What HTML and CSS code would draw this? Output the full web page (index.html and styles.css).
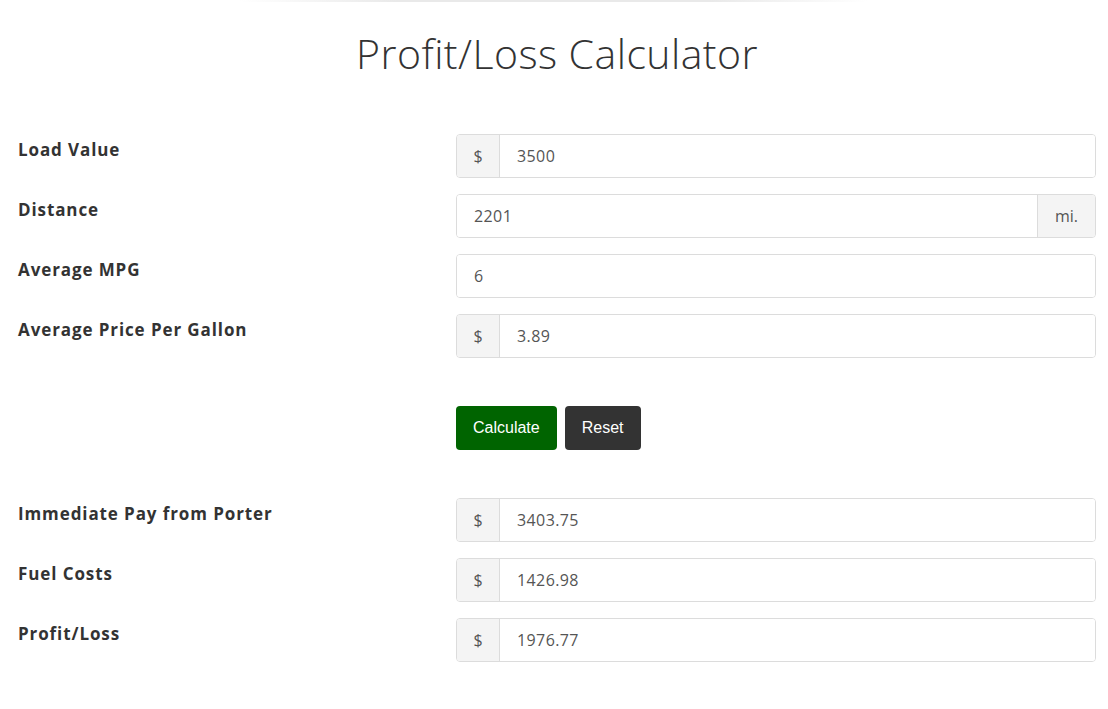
FILE: index.html
```html
<!DOCTYPE html>
<html lang="en">
<head>
<meta charset="utf-8">
<title>Profit/Loss Calculator</title>
<link rel="stylesheet" href="styles.css">
</head>
<body>
<div class="topline"></div>
<main class="page">
  <h1 class="title">Profit/Loss Calculator</h1>
  <form class="calc">
    <div class="row">
      <label class="label">Load Value</label>
      <div class="group"><span class="addon">$</span><input class="field" value="3500"></div>
    </div>
    <div class="row">
      <label class="label">Distance</label>
      <div class="group"><input class="field" value="2201"><span class="addon addon-right">mi.</span></div>
    </div>
    <div class="row">
      <label class="label">Average MPG</label>
      <div class="group"><input class="field" value="6"></div>
    </div>
    <div class="row">
      <label class="label">Average Price Per Gallon</label>
      <div class="group"><span class="addon">$</span><input class="field" value="3.89"></div>
    </div>
    <div class="row row-buttons">
      <div></div>
      <div class="buttons">
        <button type="button" class="btn btn-calc">Calculate</button>
        <button type="button" class="btn btn-reset">Reset</button>
      </div>
    </div>
    <div class="row">
      <label class="label">Immediate Pay from Porter</label>
      <div class="group"><span class="addon">$</span><input class="field" value="3403.75"></div>
    </div>
    <div class="row">
      <label class="label">Fuel Costs</label>
      <div class="group"><span class="addon">$</span><input class="field" value="1426.98"></div>
    </div>
    <div class="row">
      <label class="label">Profit/Loss</label>
      <div class="group"><span class="addon">$</span><input class="field" value="1976.77"></div>
    </div>
  </form>
</main>
</body>
</html>
```
FILE: styles.css
```css
* { box-sizing: border-box; }
html, body { margin: 0; padding: 0; background: #fff; }
body { font-family: "Open Sans", "Liberation Sans", sans-serif; color: #333; }

.topline {
  height: 2px;
  margin: 0 240px 0 240px;
  background: linear-gradient(to right, rgba(230,230,230,0), #e9e9e9 25%, #e9e9e9 75%, rgba(230,230,230,0));
}

.page { padding: 0 12px 0 18px; }

.title {
  margin: 28px 0 0 0;
  text-align: center;
  font-family: "Open Sans", sans-serif;
  font-weight: 300;
  font-size: 41px;
  line-height: 46px;
  color: #333;
  letter-spacing: 0.45px;
}

.calc { margin-top: 58px; display: flex; flex-direction: column; gap: 16px; }

.row { display: grid; grid-template-columns: 438px 1fr; }
.row-buttons { margin: 32px 0 32px 0; }

.label {
  font-family: "Open Sans", sans-serif;
  font-weight: 700;
  font-size: 17px;
  line-height: 22px;
  padding-top: 5px;
  color: #333;
  letter-spacing: 0.9px;
}

.group {
  display: flex;
  height: 44px;
  border: 1px solid #dcdcdc;
  border-radius: 4px;
  overflow: hidden;
}

.addon {
  flex: 0 0 auto;
  width: 43px;
  display: flex;
  align-items: center;
  justify-content: center;
  background: #f4f4f4;
  border-right: 1px solid #dcdcdc;
  font-family: "Open Sans", sans-serif;
  font-size: 16px;
  color: #555;
}
.addon-right { width: 58px; border-right: none; border-left: 1px solid #dcdcdc; }

.field {
  flex: 1 1 auto;
  min-width: 0;
  border: none;
  outline: none;
  padding: 0 16px 0 17px;
  font-family: "Open Sans", sans-serif;
  font-size: 16px;
  letter-spacing: 0.4px;
  color: #555;
  background: #fff;
}

.buttons { display: flex; gap: 8px; }
.btn {
  height: 44px;
  border: none;
  border-radius: 4px;
  color: #fff;
  font-family: "Liberation Sans", Arial, sans-serif;
  font-size: 16px;
  padding: 0 17px;
  cursor: pointer;
}
.btn-calc { background: #006400; }
.btn-reset { background: #333; }
```
